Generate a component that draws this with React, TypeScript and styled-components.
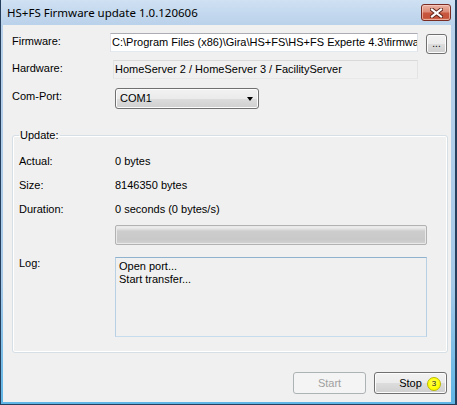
import styled, { createGlobalStyle } from "styled-components";

const GlobalStyle = createGlobalStyle`
  html, body {
    margin: 0;
    padding: 0;
    background: #ffffff;
  }
  body {
    font-family: "Liberation Sans", Arial, sans-serif;
  }
`;

const Window = styled.div`
  width: 457px;
  height: 405px;
  box-sizing: border-box;
  display: flex;
  flex-direction: column;
  border: solid #263f5c;
  border-width: 0 2px 1px 1px;
  background: linear-gradient(
    to bottom,
    #cfe1f3 0px,
    #b9d1ea 25px,
    #a6c9e8 70%,
    #5fb6e6 100%
  );
`;

const TitleBar = styled.div`
  height: 25px;
  flex: none;
  display: flex;
  align-items: flex-start;
  justify-content: space-between;
  padding: 0 4px 0 6px;
`;

const Title = styled.span`
  margin-top: 5px;
  font-family: "Noto Sans", "Open Sans", sans-serif;
  font-size: 11.5px;
  line-height: 16px;
  color: #000;
  white-space: nowrap;
`;

const CloseButton = styled.div`
  margin-top: 4px;
  width: 30px;
  height: 17px;
  box-sizing: border-box;
  border: 1px solid #7a2c22;
  border-radius: 3px;
  display: flex;
  align-items: center;
  justify-content: center;
  background: linear-gradient(
    to bottom,
    #ebb2a3 0%,
    #dc8c78 45%,
    #c9563f 55%,
    #c4533b 85%,
    #d97a5f 100%
  );
  box-shadow: inset 0 0 0 1px rgba(255, 220, 210, 0.55);
`;

const Client = styled.div`
  flex: 1;
  margin: 0 4px 2px 2px;
  background: #f0f0f0;
  display: flex;
  flex-direction: column;
  font-family: "Liberation Sans", Arial, sans-serif;
  font-size: 11px;
  line-height: 13px;
  color: #000;
`;

const TopForm = styled.div`
  display: grid;
  grid-template-columns: 90px 308px 21px;
  grid-template-rows: 27px 28px 21px;
  column-gap: 8px;
  padding: 8px 0 0 9px;
  align-items: start;
`;

const Label = styled.div`
  padding-top: 2px;
  white-space: nowrap;
`;

const TextField = styled.div<{ $inset?: number; $readOnly?: boolean }>`
  margin-left: ${(p) => p.$inset || 0}px;
  height: 19px;
  box-sizing: border-box;
  padding: 2px 1px 0 1px;
  border: 1px solid;
  border-color: ${(p) =>
    p.$readOnly ? "#d9d9d9 #e3e3e3 #e8e8e8 #e3e3e3" : "#abadb3 #dbdfe6 #e3e9ef #e2e3ea"};
  background: ${(p) => (p.$readOnly ? "#f0f0f0" : "#ffffff")};
  white-space: nowrap;
  overflow: hidden;
`;

const buttonFace = `
  box-sizing: border-box;
  border: 1px solid #707070;
  border-radius: 3px;
  background: linear-gradient(
    to bottom,
    #f2f2f2 0%,
    #ebebeb 50%,
    #dddddd 50%,
    #cfcfcf 100%
  );
  box-shadow: inset 0 0 0 1px #fcfcfc;
`;

const DotsButton = styled.div`
  ${buttonFace}
  margin-top: 1px;
  width: 21px;
  height: 20px;
  display: flex;
  align-items: flex-end;
  justify-content: center;
  padding-bottom: 3px;
  font-size: 10px;
`;

const Combo = styled.div`
  ${buttonFace}
  margin-left: 5px;
  width: 144px;
  height: 21px;
  display: flex;
  align-items: center;
  justify-content: space-between;
  padding: 0 5px 0 4px;
`;

const ComboArrow = styled.span`
  width: 0;
  height: 0;
  border-left: 3.5px solid transparent;
  border-right: 3.5px solid transparent;
  border-top: 4px solid #000;
`;

const Group = styled.fieldset`
  margin: 20px 3px 0 9px;
  padding: 13px 6px 15px 6px;
  border: 1px solid #d5dfe5;
  border-radius: 3px;
  box-shadow: inset 0 0 0 1px #ffffff;
  min-width: 0;
`;

const Legend = styled.legend`
  padding: 0 1px;
  line-height: 13px;
`;

const InfoGrid = styled.div`
  display: grid;
  grid-template-columns: 96px 312px;
  grid-template-rows: 24px 24px 22px 32px 80px;
  align-items: start;
`;

const Progress = styled.div`
  height: 20px;
  box-sizing: border-box;
  border: 1px solid #b2b2b2;
  border-radius: 2px;
  background: linear-gradient(
    to bottom,
    #f3f3f3 0px,
    #e2e2e2 3px,
    #cdcdcd 5px,
    #c9c9c9 14px,
    #d3d3d3 18px
  );
  box-shadow: inset 0 0 0 1px #e9e9e9;
`;

const LogBox = styled.div`
  height: 80px;
  box-sizing: border-box;
  border: 1px solid;
  border-color: #8fb2cf #b7d0e3 #c6dbeb #b7d0e3;
  background: #f0f0f0;
  padding: 2px 3px;
`;

const ButtonRow = styled.div`
  display: flex;
  justify-content: flex-end;
  gap: 8px;
  margin-top: 19px;
  padding-right: 4px;
`;

const PushButton = styled.div<{ $disabled?: boolean }>`
  ${buttonFace}
  position: relative;
  width: 73px;
  height: 22px;
  display: flex;
  align-items: center;
  justify-content: center;
  ${(p) =>
    p.$disabled &&
    `
    border-color: #adb2b5;
    background: #f4f4f4;
    box-shadow: none;
    color: #a0a0a0;
  `}
`;

const Badge = styled.span`
  position: absolute;
  right: 5px;
  top: 4px;
  width: 14px;
  height: 14px;
  box-sizing: border-box;
  border-radius: 50%;
  border: 1px solid #b9b900;
  background: radial-gradient(circle at 45% 40%, #ffff5a 0%, #ffff00 60%, #eaea00 100%);
  font-size: 8px;
  line-height: 12px;
  text-align: center;
  color: #222;
`;

const CloseGlyph = () => (
  <svg width="13" height="10" viewBox="0 0 13 10">
    <path d="M2 1.5 L11 8.5 M11 1.5 L2 8.5" stroke="#5b2118" strokeWidth="4" strokeLinecap="square" />
    <path d="M2 1.5 L11 8.5 M11 1.5 L2 8.5" stroke="#ffffff" strokeWidth="2.2" strokeLinecap="square" />
  </svg>
);

export default function App() {
  return (
    <>
      <GlobalStyle />
      <Window>
        <TitleBar>
          <Title>HS+FS Firmware update 1.0.120606</Title>
          <CloseButton>
            <CloseGlyph />
          </CloseButton>
        </TitleBar>
        <Client>
          <TopForm>
            <Label>Firmware:</Label>
            <TextField>C:\Program Files (x86)\Gira\HS+FS\HS+FS Experte 4.3\firmwa</TextField>
            <DotsButton>...</DotsButton>
            <Label>Hardware:</Label>
            <TextField $inset={3} $readOnly>
              HomeServer 2 / HomeServer 3 / FacilityServer
            </TextField>
            <span />
            <Label>Com-Port:</Label>
            <Combo>
              <span>COM1</span>
              <ComboArrow />
            </Combo>
            <span />
          </TopForm>

          <Group>
            <Legend>Update:</Legend>
            <InfoGrid>
              <span>Actual:</span>
              <span>0 bytes</span>
              <span>Size:</span>
              <span>8146350 bytes</span>
              <span>Duration:</span>
              <span>0 seconds (0 bytes/s)</span>
              <span />
              <Progress />
              <span>Log:</span>
              <LogBox>
                Open port...
                <br />
                Start transfer...
              </LogBox>
            </InfoGrid>
          </Group>

          <ButtonRow>
            <PushButton $disabled>Start</PushButton>
            <PushButton>
              Stop
              <Badge>3</Badge>
            </PushButton>
          </ButtonRow>
        </Client>
      </Window>
    </>
  );
}
